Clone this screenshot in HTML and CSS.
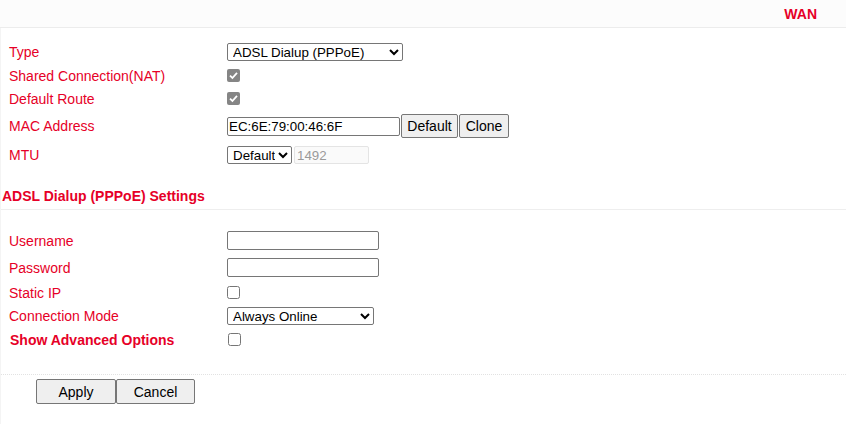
FILE: index.html
```html
<!DOCTYPE html>
<html>
<head>
<meta charset="utf-8">
<link rel="stylesheet" href="styles.css">
</head>
<body>
<div class="header"><span class="page-title">WAN</span></div>
<div class="content">
  <div class="form">
    <div class="row r-type"><div class="label">Type</div><div class="ctl">
      <select class="sel-type"><option>ADSL Dialup (PPPoE)</option></select></div></div>
    <div class="row r-check"><div class="label">Shared Connection(NAT)</div><div class="ctl"><span class="cb-on" role="checkbox" aria-checked="true" aria-disabled="true"><svg width="13" height="13" viewBox="0 0 13 13"><rect x="0" y="0" width="13" height="13" rx="2" fill="#858585"/><path d="M3 6.7 L5.4 9 L10 3.8" fill="none" stroke="#fff" stroke-width="1.8"/></svg></span></div></div>
    <div class="row r-check"><div class="label">Default Route</div><div class="ctl"><span class="cb-on" role="checkbox" aria-checked="true" aria-disabled="true"><svg width="13" height="13" viewBox="0 0 13 13"><rect x="0" y="0" width="13" height="13" rx="2" fill="#858585"/><path d="M3 6.7 L5.4 9 L10 3.8" fill="none" stroke="#fff" stroke-width="1.8"/></svg></span></div></div>
    <div class="row r-mac"><div class="label">MAC Address</div><div class="ctl">
      <input type="text" class="inp-mac" value="EC:6E:79:00:46:6F"><button class="btn-sm btn-def">Default</button><button class="btn-sm btn-clone">Clone</button></div></div>
    <div class="row r-mtu"><div class="label">MTU</div><div class="ctl">
      <select class="sel-mtu"><option>Default</option></select><input type="text" class="inp-mtu" value="1492" disabled></div></div>
  </div>
  <div class="section-title">ADSL Dialup (PPPoE) Settings</div>
  <div class="form form2">
    <div class="row r-text"><div class="label">Username</div><div class="ctl"><input type="text" class="inp-txt"></div></div>
    <div class="row r-text"><div class="label">Password</div><div class="ctl"><input type="password" class="inp-txt"></div></div>
    <div class="row r-check2"><div class="label">Static IP</div><div class="ctl"><input type="checkbox" class="cb"></div></div>
    <div class="row r-mode"><div class="label">Connection Mode</div><div class="ctl">
      <select class="sel-mode"><option>Always Online</option></select></div></div>
    <div class="row r-check2"><div class="label label-bold">Show Advanced Options</div><div class="ctl"><input type="checkbox" class="cb"></div></div>
  </div>
  <div class="actions">
    <button class="btn">Apply</button><button class="btn">Cancel</button>
  </div>
</div>
</body>
</html>
```
FILE: styles.css
```css
html, body {
  margin: 0;
  padding: 0;
  background: #ffffff;
  font-family: "Liberation Sans", Arial, sans-serif;
}
.header {
  height: 27px;
  background: #fcfcfc;
  border-bottom: 1px solid #ececec;
  display: flex;
  justify-content: flex-end;
  align-items: center;
  padding-right: 29px;
}
.page-title {
  color: #e60027;
  font-weight: bold;
  font-size: 14px;
}
.content {
  border-left: 1px solid #f4f4f4;
}
.form {
  padding-top: 12px;
}
.row {
  display: flex;
  align-items: center;
}
.label {
  width: 218px;
  padding-left: 8px;
  color: #e60027;
  font-size: 14px;
  flex-shrink: 0;
}
.label-bold {
  font-weight: bold;
  padding-left: 9px;
}
.ctl {
  display: flex;
  align-items: center;
}
.r-type { height: 24px; }
.r-check { height: 23px; }
.r-mac { height: 32px; }
.r-mtu { height: 26px; }
.r-text { height: 27px; }
.r-check2 { height: 23px; }
.r-mode { height: 24px; }

select, input, button {
  font-family: "Liberation Sans", Arial, sans-serif;
  font-size: 13.33px;
  color: #000;
  margin: 0;
}
select {
  height: 18px;
  border: 1px solid #767676;
  border-radius: 2px;
  background: #fff;
  padding: 0 0 0 1px;
}
.sel-type { width: 176px; }
.sel-mtu { width: 65px; }
.sel-mode { width: 147px; }
.cb {
  width: 13px;
  height: 13px;
  margin: 0;
}
.cb-on {
  display: flex;
  width: 13px;
  height: 13px;
}
.inp-mac {
  width: 173px;
  height: 19px;
  box-sizing: border-box;
  border: 1px solid #767676;
  border-radius: 2px;
  padding: 0 1px;
  font-size: 13.33px;
}
.inp-mtu {
  width: 75px;
  height: 18px;
  box-sizing: border-box;
  border: 1px solid #e4e4e4;
  border-radius: 2px;
  padding: 0 2px;
  margin-left: 2px;
  background: #fafafa;
  color: #9a9a9a;
}
.inp-txt {
  width: 152px;
  height: 19px;
  box-sizing: border-box;
  border: 1px solid #767676;
  border-radius: 2px;
  padding: 0 2px;
}
.btn-sm {
  height: 24px;
  box-sizing: border-box;
  border: 1px solid #767676;
  border-radius: 2px;
  background: #efefef;
  font-size: 14px;
  padding: 0;
  margin-left: 1px;
}
.btn-def { width: 57px; }
.btn-clone { width: 50px; }
.section-title {
  margin-top: 20px;
  padding: 0 0 5px 1px;
  color: #e60027;
  font-weight: bold;
  font-size: 14px;
  border-bottom: 1px solid #eeeeee;
}
.form2 {
  padding-top: 17px;
}
.actions {
  margin-top: 23px;
  border-top: 1px dotted #e2e2e2;
  padding: 4px 0 20px 35px;
  display: flex;
}
.btn {
  width: 80px;
  height: 25px;
  box-sizing: border-box;
  border: 1px solid #767676;
  border-radius: 2px;
  background: #efefef;
  font-size: 14px;
  padding: 0;
}
.btn + .btn { width: 79px; }
```
